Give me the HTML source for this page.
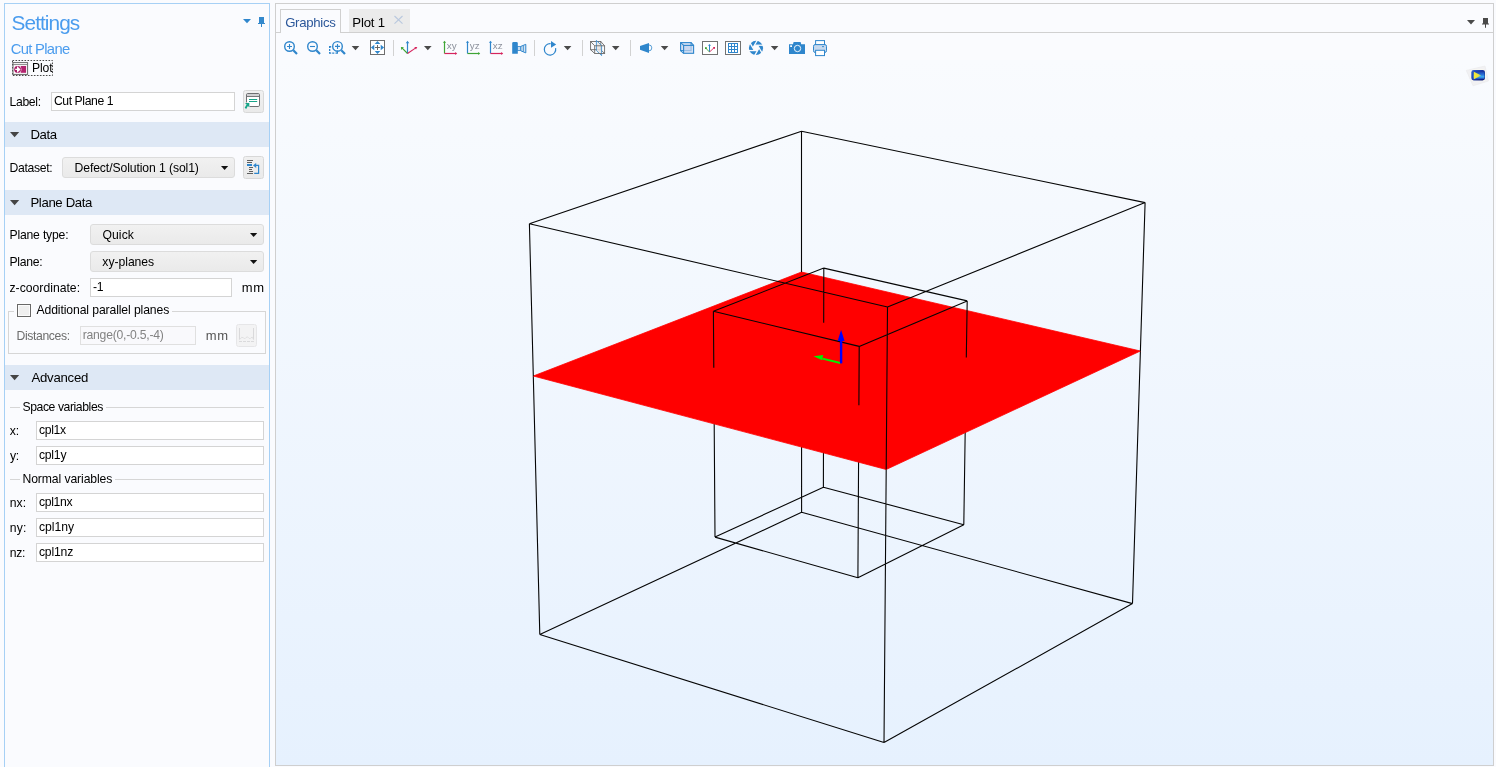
<!DOCTYPE html>
<html lang="en">
<head>
<meta charset="utf-8">
<title>Settings - Cut Plane</title>
<style>
html,body{margin:0;padding:0;}
body{width:1496px;height:767px;overflow:hidden;background:#fafbfe;font-family:"Liberation Sans",sans-serif;font-size:12px;color:#000;position:relative;}
.abs{position:absolute;}
.t{position:absolute;white-space:nowrap;line-height:1;}
#root{position:absolute;left:0;top:0;width:1496px;height:767px;will-change:transform;}
#settings{position:absolute;left:4px;top:3px;width:264px;height:780px;border:1px solid #a6d0f5;border-bottom:none;box-sizing:content-box;}
#graphics{position:absolute;left:275px;top:3px;width:1217px;height:761px;border:1px solid #cfcfcf;}
.hdr{position:absolute;left:5px;width:264px;height:25px;background:#dee8f5;}
.tri{position:absolute;width:0;height:0;border-left:4.5px solid transparent;border-right:4.5px solid transparent;border-top:5px solid #444;}
.inp{position:absolute;box-sizing:border-box;height:19px;background:#fff;border:1px solid #d4d4d4;}
.cmb{position:absolute;box-sizing:border-box;height:21px;background:linear-gradient(#f1f1f1,#eaeaea);border:1px solid #dcdcdc;border-radius:3px;}
.btn{position:absolute;box-sizing:border-box;width:21px;height:23px;background:linear-gradient(#f0f0f0,#eaeaea);border:1px solid #d8d8d8;border-radius:2.5px;}
.dd{position:absolute;width:0;height:0;border-left:3.5px solid transparent;border-right:3.5px solid transparent;border-top:4px solid #000;}
.tdd{position:absolute;width:0;height:0;border-left:4px solid transparent;border-right:4px solid transparent;border-top:4.5px solid #4a4a4a;}
.sep{position:absolute;top:40px;width:1px;height:16px;background:#d2d2d2;}
.gl{position:absolute;height:1px;background:#d6d6d6;}
svg{position:absolute;overflow:visible;}
</style>
</head>
<body>
<div id="root">

<!-- ===================== SETTINGS PANEL ===================== -->
<div id="settings"></div>
<div class="t" id="tSettings" style="left:11.56px;top:13.00px;font-size:20.8px;color:#4a9cee;letter-spacing:-0.923px;">Settings</div>
<div class="t" id="tCutPlane" style="left:10.75px;top:42.00px;font-size:14.8px;color:#4a9cee;letter-spacing:-0.698px;">Cut Plane</div>

<!-- pane menu + pin -->
<svg style="left:240px;top:14px" width="28" height="16" viewBox="240 14 28 16">
  <path d="M243 19 L251 19 L247 23.3 Z" fill="#2f86cc"/>
  <path d="M259 17 h5 v6 h1 v1 h-3 v3 h-1 v-3 h-3 v-1 h1 Z" fill="#3388cc"/>
</svg>

<!-- Plot button -->
<svg style="left:11px;top:59px" width="44" height="18" viewBox="11 59 44 18">
  <rect x="12.5" y="60.5" width="40" height="15" fill="none" stroke="#4a4a4a" stroke-width="1" stroke-dasharray="1.6 1.4"/>
  <rect x="13" y="62.6" width="14.6" height="11.8" fill="#fff" stroke="#666" stroke-width="1"/>
  <path d="M13 64.6 H27.6" stroke="#777" stroke-width="0.9"/>
  <rect x="20.6" y="66" width="5.5" height="6.8" fill="#b3246f"/>
  <circle cx="17.6" cy="69.4" r="3.8" fill="#fff"/>
  <circle cx="17.6" cy="69.4" r="3.4" fill="#a81c66"/>
  <path d="M15.2 69.4 H18.6 M17.6 67.3 L19.8 69.4 L17.6 71.5 Z" stroke="#fff" stroke-width="1.1" fill="#fff"/>
</svg>
<div class="t" id="tPlot" style="left:32.00px;top:62.00px;font-size:12.2px;letter-spacing:-0.144px;">Plot</div>

<!-- Label row -->
<div class="t" id="tLabel" style="left:9.50px;top:96.00px;letter-spacing:-0.325px;font-size:12.2px;">Label:</div>
<div class="inp" style="left:51px;top:92px;width:184px;"></div>
<div class="t" id="tLabelV" style="left:53.88px;top:95.00px;font-size:12.2px;letter-spacing:-0.404px;">Cut Plane 1</div>
<div class="btn" style="left:243px;top:90px;"></div>
<svg style="left:244px;top:92px" width="18" height="18" viewBox="244 92 18 18">
  <rect x="246.5" y="93.5" width="13" height="13" rx="1.3" fill="#fff" stroke="#6e6f72" stroke-width="1"/>
  <rect x="247" y="94" width="12" height="2" fill="#d0d0d2"/>
  <path d="M247 96.5 H259" stroke="#77787b" stroke-width="1"/>
  <path d="M249 99.5 H257.2 M249 101.5 H257.2" stroke="#17a589" stroke-width="1"/>
  <rect x="244.4" y="102.4" width="5.2" height="6.4" fill="#eeeeee"/>
  <path d="M245 103 H249.3 V107.3 L247.9 105.9 L246.2 109 L244.7 107.7 L246.6 104.6 Z" fill="#17a589"/>
</svg>

<!-- Data section -->
<div class="hdr" style="top:122px;"></div>
<svg style="left:10px;top:132px" width="10" height="6" viewBox="0 0 10 6"><path d="M0 0 H9.2 L4.6 5.2 Z" fill="#444"/></svg>
<div class="t" id="tData" style="left:30.42px;top:128.00px;font-size:13.2px;letter-spacing:-0.433px;">Data</div>

<div class="t" id="tDataset" style="left:9.50px;top:162.00px;font-size:12.2px;letter-spacing:-0.331px;">Dataset:</div>
<div class="cmb" style="left:62px;top:157px;width:173px;"></div>
<div class="t" id="tDatasetV" style="left:74.50px;top:162.00px;font-size:12.2px;letter-spacing:-0.098px;">Defect/Solution 1 (sol1)</div>
<svg style="left:221px;top:166px" width="8" height="5" viewBox="0 0 8 5"><path d="M0 0 H7.2 L3.6 4.1 Z" fill="#111"/></svg>
<div class="btn" style="left:243px;top:156px;"></div>
<svg style="left:244px;top:158px" width="18" height="18" viewBox="244 158 18 18">
  <path d="M247 160.5 H253 M247 162.5 H252 M249 167.5 H253 M249 169.5 H252 M249 171.5 H253 M247 173.5 H253" stroke="#5e5e5e" stroke-width="1"/>
  <rect x="247" y="164" width="5" height="2" fill="#2f86cc"/>
  <path d="M254.2 173.4 H258.6 V165.4 H255.5" stroke="#2f86cc" stroke-width="1.2" fill="none"/>
  <path d="M253 165.4 L256.2 162.9 V167.9 Z" fill="#2f86cc"/>
</svg>

<!-- Plane Data section -->
<div class="hdr" style="top:190px;"></div>
<svg style="left:10px;top:200px" width="10" height="6" viewBox="0 0 10 6"><path d="M0 0 H9.2 L4.6 5.2 Z" fill="#444"/></svg>
<div class="t" id="tPlaneData" style="left:30.42px;top:196.00px;font-size:13.2px;letter-spacing:-0.359px;">Plane Data</div>

<div class="t" id="tPlaneType" style="left:9.50px;top:229.00px;font-size:12.2px;letter-spacing:-0.193px;">Plane type:</div>
<div class="cmb" style="left:90px;top:224px;width:174px;"></div>
<div class="t" id="tQuick" style="left:102.42px;top:229.00px;font-size:12.2px;letter-spacing:0.094px;">Quick</div>
<svg style="left:250px;top:233px" width="8" height="5" viewBox="0 0 8 5"><path d="M0 0 H7.2 L3.6 4.1 Z" fill="#111"/></svg>

<div class="t" id="tPlane" style="left:9.50px;top:256.00px;font-size:12.2px;letter-spacing:-0.296px;">Plane:</div>
<div class="cmb" style="left:90px;top:251px;width:174px;"></div>
<div class="t" id="tXY" style="left:102.36px;top:256.00px;font-size:12.2px;letter-spacing:-0.042px;">xy-planes</div>
<svg style="left:250px;top:260px" width="8" height="5" viewBox="0 0 8 5"><path d="M0 0 H7.2 L3.6 4.1 Z" fill="#111"/></svg>

<div class="t" id="tZ" style="left:9.51px;top:282.00px;font-size:12.2px;letter-spacing:0.007px;">z-coordinate:</div>
<div class="inp" style="left:90px;top:278px;width:142px;"></div>
<div class="t" id="tZV" style="left:92.96px;top:281.00px;font-size:12.2px;letter-spacing:-0.210px;">-1</div>
<div class="t" id="tMM1" style="left:241.84px;top:281.00px;font-size:13px;letter-spacing:0.662px;">mm</div>

<!-- Additional parallel planes group -->
<div class="abs" style="left:8px;top:311px;width:258px;height:43px;border:1px solid #d6d6d6;box-sizing:border-box;"></div>
<div class="abs" style="left:14px;top:310px;width:158px;height:3px;background:#fafbfe;"></div>
<div class="abs" style="left:16px;top:303px;width:16px;height:15px;background:#fdfdfe;"></div>
<div class="abs" style="left:17px;top:304px;width:14px;height:13px;box-sizing:border-box;border:1px solid #686868;background:#efefef;box-shadow:inset 0 0 0 1px #fbfbfb;"></div>
<div class="t" id="tAdd" style="left:36.48px;top:304.00px;font-size:12.2px;letter-spacing:-0.107px;">Additional parallel planes</div>
<div class="t" id="tDist" style="left:16.50px;top:330.00px;font-size:12.2px;letter-spacing:-0.371px;color:#6d6d6d;">Distances:</div>
<div class="inp" style="left:80px;top:326px;width:116px;background:#f9f9fc;border-color:#e0e0e0;"></div>
<div class="t" id="tRange" style="left:82.69px;top:329.00px;font-size:12.2px;letter-spacing:-0.233px;color:#838383;">range(0,-0.5,-4)</div>
<div class="t" id="tMM2" style="left:205.84px;top:329.00px;font-size:13px;color:#555;letter-spacing:0.662px;">mm</div>
<div class="btn" style="left:236px;top:324px;background:#f3f3f4;border-color:#e6e6e8;"></div>
<svg style="left:238px;top:327px" width="18" height="18" viewBox="238 327 18 18">
  <path d="M239.5 328 V339.6 M253.5 328 V339.6" stroke="#d9d9db" stroke-width="1"/>
  <path d="M240 339.3 q1.6 -3.2 3.4 -1.6 q1.2 2.4 2.4 0 q1.4 -1.6 2.8 0 q1.2 2.4 2.4 0 q1.8 -1.6 2.4 1.6" stroke="#dcdcde" stroke-width="0.9" fill="none"/>
  <path d="M239 341.5 H254" stroke="#dadadc" stroke-width="1" stroke-dasharray="3 1"/>
</svg>

<!-- Advanced section -->
<div class="hdr" style="top:365px;"></div>
<svg style="left:10px;top:375px" width="10" height="6" viewBox="0 0 10 6"><path d="M0 0 H9.2 L4.6 5.2 Z" fill="#444"/></svg>
<div class="t" id="tAdvanced" style="left:31.47px;top:371.00px;font-size:13.2px;letter-spacing:-0.262px;">Advanced</div>

<div class="gl" style="left:10px;top:407px;width:10px;"></div>
<div class="gl" style="left:106px;top:407px;width:158px;"></div>
<div class="t" id="tSpace" style="left:22.45px;top:401.00px;font-size:12.2px;letter-spacing:-0.415px;">Space variables</div>

<div class="t" id="tx" style="left:9.86px;top:425.00px;font-size:12.2px;letter-spacing:-0.239px;">x:</div>
<div class="inp" style="left:36px;top:421px;width:228px;"></div>
<div class="t" id="txV" style="left:38.98px;top:424.00px;font-size:12.2px;letter-spacing:-0.333px;">cpl1x</div>

<div class="t" id="ty" style="left:9.97px;top:450.00px;font-size:12.2px;letter-spacing:-0.346px;">y:</div>
<div class="inp" style="left:36px;top:446px;width:228px;"></div>
<div class="t" id="tyV" style="left:38.98px;top:449.00px;font-size:12.2px;letter-spacing:-0.235px;">cpl1y</div>

<div class="gl" style="left:10px;top:479px;width:10px;"></div>
<div class="gl" style="left:115px;top:479px;width:149px;"></div>
<div class="t" id="tNormal" style="left:22.50px;top:473.00px;font-size:12.2px;letter-spacing:-0.106px;">Normal variables</div>

<div class="t" id="tnx" style="left:9.69px;top:497.00px;font-size:12.2px;letter-spacing:0.075px;">nx:</div>
<div class="inp" style="left:36px;top:493px;width:228px;"></div>
<div class="t" id="tnxV" style="left:38.98px;top:496.00px;font-size:12.2px;letter-spacing:-0.323px;">cpl1nx</div>

<div class="t" id="tny" style="left:9.69px;top:522.00px;font-size:12.2px;letter-spacing:0.225px;">ny:</div>
<div class="inp" style="left:36px;top:518px;width:228px;"></div>
<div class="t" id="tnyV" style="left:38.98px;top:521.00px;font-size:12.2px;letter-spacing:-0.045px;">cpl1ny</div>

<div class="t" id="tnz" style="left:9.69px;top:547.00px;font-size:12.2px;letter-spacing:-0.275px;">nz:</div>
<div class="inp" style="left:36px;top:543px;width:228px;"></div>
<div class="t" id="tnzV" style="left:38.98px;top:546.00px;font-size:12.2px;letter-spacing:-0.188px;">cpl1nz</div>

<!-- ===================== GRAPHICS PANEL ===================== -->
<div id="graphics"></div>

<!-- canvas gradient background -->
<div class="abs" style="left:276px;top:60px;width:1217px;height:705px;background:linear-gradient(#f9fbfe 0%,#e6f1fe 100%);"></div>

<!-- tabs -->
<div class="abs" style="left:276px;top:32px;width:1217px;height:1px;background:#d0d0d0;"></div>
<div class="abs" style="left:349px;top:9px;width:61px;height:23px;background:#ebebeb;"></div>
<div class="abs" style="left:280px;top:9px;width:61px;height:24px;box-sizing:border-box;border:1px solid #d0d0d0;border-bottom:none;background:#fafbfe;"></div>
<div class="t" id="tGraphics" style="left:285.14px;top:16.00px;font-size:13.2px;color:#2b579a;letter-spacing:-0.297px;">Graphics</div>
<div class="t" id="tPlot1" style="left:352.32px;top:16.00px;font-size:13.2px;color:#000;letter-spacing:-0.185px;">Plot 1</div>
<svg style="left:393px;top:14px" width="12" height="12" viewBox="393 14 12 12">
  <path d="M394.5 16 L402.5 23.7 M402.5 16 L394.5 23.7" stroke="#b9c8de" stroke-width="1.1" fill="none"/>
</svg>
<!-- pane menu + pin (gray) -->
<svg style="left:1464px;top:14px" width="28" height="16" viewBox="1464 14 28 16">
  <path d="M1467 20 L1475 20 L1471 24.5 Z" fill="#4a4a4a"/>
  <path d="M1483 18 h5 v5.4 h1 v1 h-3 v3.3 h-1 v-3.3 h-3 v-1 h1 Z" fill="#4a4a4a"/>
</svg>

<!-- toolbar -->
<svg style="left:276px;top:36px" width="600" height="24" viewBox="276 36 600 24" font-family="Liberation Sans, sans-serif">
  <!-- zoom in -->
  <g stroke="#2f86cc" fill="none">
    <circle cx="289.5" cy="46.5" r="4.8" stroke-width="1.4"/>
    <path d="M287 46.5 h5 M289.5 44 v5" stroke-width="1.1"/>
    <path d="M293.3 50.3 L297 54" stroke-width="2.2"/>
  </g>
  <!-- zoom out -->
  <g stroke="#2f86cc" fill="none">
    <circle cx="312.5" cy="46.5" r="4.8" stroke-width="1.4"/>
    <path d="M310 46.5 h5" stroke-width="1.1"/>
    <path d="M316.3 50.3 L320 54" stroke-width="2.2"/>
  </g>
  <!-- zoom box -->
  <g stroke="#2f86cc" fill="none">
    <path d="M329 46.1 h2.2 v1.3 h-0.9 v0.5 h-1.3 Z M329 48.9 h1.3 v2.1 h-1.3 Z M329 52.1 h1.3 v0.4 h0.9 v1.3 h-2.2 Z M332.2 52.5 h2.1 v1.3 h-2.1 Z M335.5 52.5 h1.2 v-2 h1.3 v3.3 h-2.5 Z" fill="#2f86cc" stroke="none"/>
    <circle cx="337.5" cy="46.4" r="4.8" stroke-width="1.4"/>
    <path d="M335 46.4 h5 M337.5 43.9 v5" stroke-width="1.1"/>
    <path d="M341.3 50.2 L345 54" stroke-width="2.2"/>
    <path d="M333.4 48.4 L336.2 51.6" stroke-width="0.7" stroke-opacity="0.55"/>
  </g>
  <path d="M351.7 46 h7.6 l-3.8 4.2 z" fill="#4a4a4a"/>
  <!-- zoom extents -->
  <rect x="370.5" y="40.5" width="14" height="14" fill="#fff" stroke="#6e6e6e" stroke-width="1"/>
  <path d="M374.7 43.9 L377.5 40.9 L380.3 43.9 Z M374.7 51.1 L377.5 54.1 L380.3 51.1 Z M374.3 44.8 L370.9 47.5 L374.3 50.2 Z M380.7 44.8 L384.1 47.5 L380.7 50.2 Z" fill="#2f86cc"/>
  <path d="M375 47.5 h5 M377.5 45 v5" stroke="#5a5a5a" stroke-width="0.9" fill="none"/>
  <rect x="393" y="40" width="1" height="16" fill="#d2d2d2"/>
  <!-- go to default view (axes) -->
  <path d="M407.5 53.5 V42" stroke="#2f86cc" stroke-width="1.2"/>
  <path d="M405.7 43.2 L407.5 40.8 L409.3 43.2 Z" fill="#2f86cc"/>
  <path d="M407.5 53.5 L402.2 48.2" stroke="#3fa535" stroke-width="1.1"/>
  <path d="M400.9 46.9 L403.9 47.2 L401.3 49.9 Z" fill="#3fa535"/>
  <path d="M407.5 53.5 L415.8 47.9" stroke="#d6245d" stroke-width="1.1"/>
  <path d="M417.3 46.9 L414.3 47 L416 49.6 Z" fill="#d6245d"/>
  <path d="M424 46 h7.6 l-3.8 4.2 z" fill="#4a4a4a"/>
  <!-- xy -->
  <path d="M444.5 53.5 V42" stroke="#3fa535" stroke-width="1.2"/>
  <path d="M442.9 42.8 L444.5 40.8 L446.1 42.8 Z" fill="#3fa535"/>
  <path d="M444.5 53.5 H456" stroke="#d6245d" stroke-width="1.2"/>
  <path d="M455.2 51.9 L457.2 53.5 L455.2 55.1 Z" fill="#d6245d"/>
  <text x="446.8" y="48.6" font-size="9.9" fill="#8b909b">xy</text>
  <!-- yz -->
  <path d="M467.5 53.5 V42" stroke="#2f86cc" stroke-width="1.2"/>
  <path d="M465.9 42.8 L467.5 40.8 L469.1 42.8 Z" fill="#2f86cc"/>
  <path d="M467.5 53.5 H479" stroke="#3fa535" stroke-width="1.2"/>
  <path d="M478.2 51.9 L480.2 53.5 L478.2 55.1 Z" fill="#3fa535"/>
  <text x="469.8" y="48.6" font-size="9.9" fill="#8b909b">yz</text>
  <!-- xz -->
  <path d="M490.5 53.5 V42" stroke="#2f86cc" stroke-width="1.2"/>
  <path d="M488.9 42.8 L490.5 40.8 L492.1 42.8 Z" fill="#2f86cc"/>
  <path d="M490.5 53.5 H502" stroke="#d6245d" stroke-width="1.2"/>
  <path d="M501.2 51.9 L503.2 53.5 L501.2 55.1 Z" fill="#d6245d"/>
  <text x="492.8" y="48.6" font-size="9.9" fill="#8b909b">xz</text>
  <!-- scene camera -->
  <path d="M512.2 53.8 V43.4 q0 -1.3 1.3 -1.3 h3 q1.3 0 1.3 1.3 V53.8 Z" fill="#2f86cc"/>
  <rect x="517.5" y="46.6" width="3.5" height="3.8" fill="#c9dcf0" stroke="#2f86cc" stroke-width="0.8"/>
  <path d="M520.8 46.4 L525.8 44.3 V52.9 L520.8 50.8 Z" fill="#d6e4f3" stroke="#2f86cc" stroke-width="1"/>
  <path d="M523.3 45.5 V51.7" stroke="#2f86cc" stroke-width="0.9"/>
  <rect x="534" y="40" width="1" height="16" fill="#d2d2d2"/>
  <!-- rotate -->
  <path d="M550.6 43.7 A5.7 5.7 0 1 0 555.6 48.2" stroke="#2f86cc" stroke-width="1.2" fill="none"/>
  <path d="M551 40.9 L556.2 44.4 L551 47.8 Z" fill="#2f86cc"/>
  <path d="M563.8 46 h7.6 l-3.8 4.2 z" fill="#4a4a4a"/>
  <rect x="582" y="40" width="1" height="16" fill="#d2d2d2"/>
  <!-- clipping cube -->
  <g stroke="#6a6a6a" stroke-width="0.9" fill="none">
    <rect x="590.6" y="41.5" width="10.2" height="8.2"/>
    <path d="M590.6 41.5 L594.7 45.8 M600.8 41.5 L604.6 45.8 M590.6 49.7 L594.7 53.5 M600.8 49.7 L604.6 53.5"/>
  </g>
  <path d="M596.4 40.4 V50.5 L601.6 55.6 V45.5 Z" fill="#e6e3e0" fill-opacity="0.85" stroke="#2f86cc" stroke-width="0.8"/>
  <rect x="594.7" y="45.8" width="9.9" height="7.7" stroke="#6a6a6a" stroke-width="0.9" fill="none"/>
  <path d="M611.9 46 h7.6 l-3.8 4.2 z" fill="#4a4a4a"/>
  <rect x="630" y="40" width="1" height="16" fill="#d2d2d2"/>
  <!-- scene light -->
  <circle cx="648.8" cy="47.9" r="3" fill="#fafbfe" stroke="#2f86cc" stroke-width="0.8"/>
  <path d="M640 46.1 V49.8 L649 52.9 V43 Z" fill="#2f86cc"/>
  <path d="M660.8 46 h7.6 l-3.8 4.2 z" fill="#4a4a4a"/>
  <!-- transparency box -->
  <g stroke="#2f86cc" stroke-width="1.1" fill="#c4d4ee" fill-opacity="0.7">
    <rect x="680.6" y="42.6" width="10.5" height="8"/>
    <path d="M680.6 42.6 L683.6 45.4 M691.1 42.6 L693.6 45.4 M680.6 50.6 L683.6 53.3" fill="none"/>
    <rect x="683.6" y="45.4" width="10" height="7.9"/>
  </g>
  <!-- show axis orientation -->
  <rect x="702.5" y="41.5" width="15" height="13" fill="#fff" stroke="#727272" stroke-width="1"/>
  <path d="M709.5 52 V45" stroke="#2f86cc" stroke-width="1"/>
  <path d="M708 45.8 L709.5 43.9 L711 45.8 Z" fill="#2f86cc"/>
  <path d="M709.5 52 L706 48.4" stroke="#3fa535" stroke-width="0.9"/>
  <rect x="705" y="47.2" width="1.8" height="1.8" fill="#3fa535"/>
  <path d="M709.5 52 L713.6 48.2" stroke="#d6245d" stroke-width="0.9"/>
  <rect x="713.2" y="47" width="1.8" height="1.8" fill="#d6245d"/>
  <!-- show grid -->
  <rect x="725.5" y="41.5" width="15" height="13" fill="#fff" stroke="#727272" stroke-width="1"/>
  <rect x="728" y="43" width="10" height="10" fill="#2f86cc"/>
  <g fill="#fff">
    <rect x="729" y="44" width="2" height="2"/><rect x="732" y="44" width="2" height="2"/><rect x="735" y="44" width="2" height="2"/>
    <rect x="729" y="47" width="2" height="2"/><rect x="732" y="47" width="2" height="2"/><rect x="735" y="47" width="2" height="2"/>
    <rect x="729" y="50" width="2" height="2"/><rect x="732" y="50" width="2" height="2"/><rect x="735" y="50" width="2" height="2"/>
  </g>
  <!-- aperture -->
  <g transform="translate(756 47.9)">
    <circle r="7.1" fill="#2f86cc"/>
    <g stroke="#fafbfe" stroke-width="1.3"><path d="M1.55 -2.68 L6.85 6.50"/><path d="M3.10 0.00 L-2.20 9.18"/><path d="M1.55 2.68 L-9.05 2.68"/><path d="M-1.55 2.68 L-6.85 -6.50"/><path d="M-3.10 0.00 L2.20 -9.18"/><path d="M-1.55 -2.68 L9.05 -2.68"/></g>
    <polygon points="3.10,0.00 1.55,2.68 -1.55,2.68 -3.10,0.00 -1.55,-2.68 1.55,-2.68" fill="#fafbfe"/>
  </g>
  <path d="M770.8 46 h7.6 l-3.8 4.2 z" fill="#4a4a4a"/>
  <!-- snapshot camera -->
  <path d="M789 44.3 h4 l0.6 -2.2 h7 l0.6 2.2 h3.8 V53.9 H789 Z" fill="#2f86cc"/>
  <circle cx="797.5" cy="48.5" r="3.2" fill="none" stroke="#fff" stroke-width="0.9"/>
  <rect x="790.2" y="45.3" width="1.8" height="1.7" fill="#fff"/>
  <!-- printer -->
  <rect x="813.5" y="44.5" width="13" height="8" rx="1.8" fill="#c6d9ee" stroke="#2f86cc" stroke-width="1"/>
  <rect x="815.6" y="40.6" width="8.9" height="4" fill="#fff" stroke="#2f86cc" stroke-width="1"/>
  <rect x="815.6" y="50.3" width="8.9" height="5.3" fill="#fff" stroke="#2f86cc" stroke-width="1"/>
  <rect x="822" y="46.2" width="2" height="0.9" fill="#2f86cc"/>
</svg>
<!-- image snapshot icon (top-right of canvas) -->
<svg style="left:1464px;top:64px" width="28" height="24" viewBox="1464 64 28 24">
  <defs>
    <linearGradient id="gBlue" x1="0" y1="0" x2="1" y2="0.6">
      <stop offset="0" stop-color="#2f63d0"/><stop offset="0.5" stop-color="#1b3fb0"/><stop offset="1" stop-color="#0a1670"/>
    </linearGradient>
    <linearGradient id="gSky" x1="0" y1="0" x2="0" y2="1">
      <stop offset="0" stop-color="#1a3aa8"/><stop offset="0.45" stop-color="#2c78dc"/><stop offset="0.7" stop-color="#3fb0f4"/><stop offset="1" stop-color="#1a3cae"/>
    </linearGradient>
    <linearGradient id="gYel" x1="0" y1="0" x2="1" y2="0">
      <stop offset="0" stop-color="#f6ea3a"/><stop offset="0.6" stop-color="#e8e040"/><stop offset="1" stop-color="#7cc8a0"/>
    </linearGradient>
  </defs>
  <path d="M1466.3 70.4 L1485 66 L1488.4 81 L1473 85.8 Z" fill="#f1f1f3" stroke="#e9e9eb" stroke-width="0.6"/>
  <rect x="1470.6" y="69.5" width="15" height="11.6" rx="2.8" fill="#fdfbf0"/>
  <rect x="1471.3" y="70.1" width="13.7" height="10.4" rx="2.4" fill="url(#gBlue)"/>
  <rect x="1473.6" y="71.4" width="11" height="7.8" rx="0.8" fill="url(#gSky)"/>
  <path d="M1473.8 71.8 L1481.2 75.4 L1473.8 79.2 Z" fill="url(#gYel)"/>
</svg>


<!-- 3D scene -->
<!--SCENE-START--><svg style="left:276px;top:60px" width="1217" height="705" viewBox="276 60 1217 705">
  <path d="M801.5 272.0 L801.6 512.3 M533.3 376.0 L539.8 634.4 M1140.4 351.0 L1132.5 603.6 M886.2 469.5 L884.0 742.6 M801.6 512.3 L539.8 634.4 M539.8 634.4 L884.0 742.6 M884.0 742.6 L1132.5 603.6 M1132.5 603.6 L801.6 512.3 M823.7 322.8 L823.4 487.2 M713.8 367.8 L715.0 537.1 M966.3 357.5 L963.8 524.7 M858.9 405.3 L857.9 577.8 M823.4 487.2 L715.0 537.1 M715.0 537.1 L857.9 577.8 M857.9 577.8 L963.8 524.7 M963.8 524.7 L823.4 487.2" stroke="#050505" stroke-width="1.1" fill="none"/>
  <polygon points="801.5,272.0 1140.4,351.0 886.2,469.5 533.3,376.0" fill="#ff0000" stroke="#ff0000" stroke-width="0.8" stroke-linejoin="round"/>
  <path d="M801.5 131.2 L801.5 272.0 M529.4 223.7 L533.3 376.0 M1145.1 202.6 L1140.4 351.0 M887.5 307.0 L886.2 469.5 M801.5 131.2 L529.4 223.7 M529.4 223.7 L887.5 307.0 M887.5 307.0 L1145.1 202.6 M1145.1 202.6 L801.5 131.2 M823.8 268.1 L823.7 322.8 M713.4 311.3 L713.8 367.8 M967.2 300.9 L966.3 357.5 M859.2 346.4 L858.9 405.3 M823.8 268.1 L713.4 311.3 M713.4 311.3 L859.2 346.4 M859.2 346.4 L967.2 300.9 M967.2 300.9 L823.8 268.1" stroke="#050505" stroke-width="1.1" fill="none"/>
  <path d="M840.4 363 L822.5 358.7" stroke="#00f000" stroke-width="1.9" fill="none"/>
  <path d="M813.5 356.2 L823.2 355 L822.1 360.3 Z" fill="#00f000"/>
  <rect x="839.9" y="340" width="2.4" height="23.4" fill="#0000ff"/>
  <path d="M841.1 330 L844.6 341 L837.6 341 Z" fill="#0000ff"/>
</svg><!--SCENE-END-->


</div>
</body>
</html>
